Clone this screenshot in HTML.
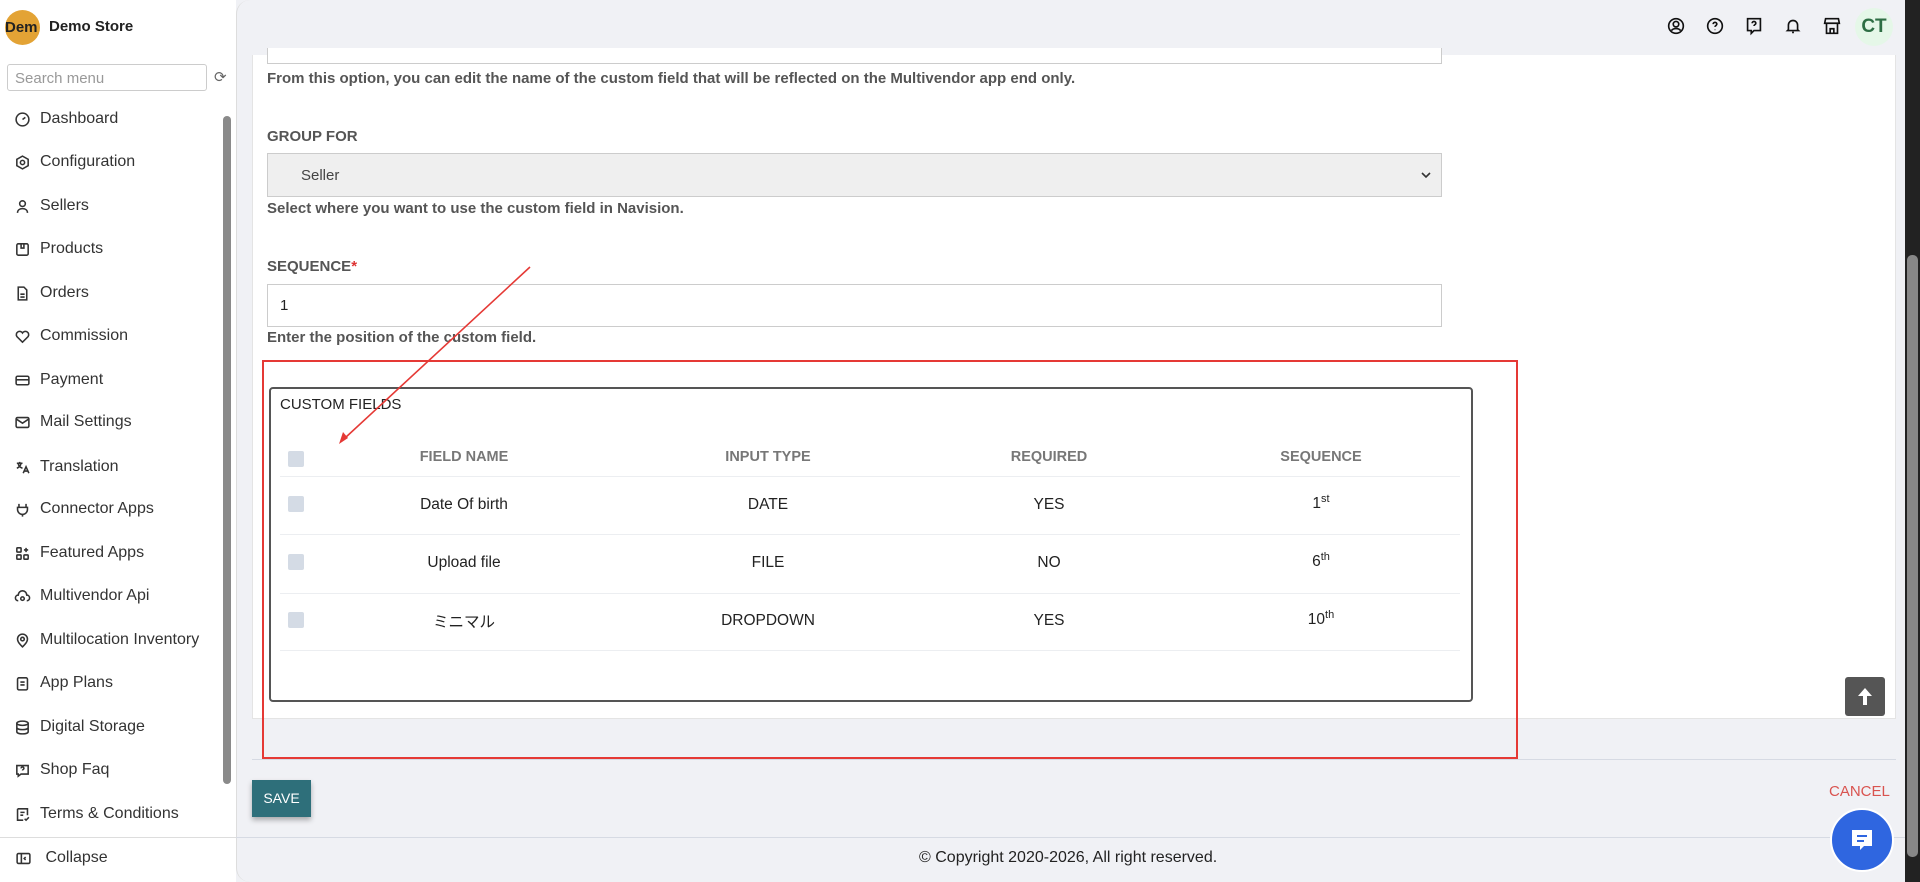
<!DOCTYPE html>
<html><head><meta charset="utf-8"><style>
*{box-sizing:border-box;margin:0;padding:0}
body{width:1920px;height:882px;overflow:hidden;background:#f0f1f5;font-family:"Liberation Sans","Noto Sans CJK JP",sans-serif;position:relative;color:#222}
.a{position:absolute}
.side{left:0;top:0;width:236px;height:882px;background:#fff}
.mi{position:absolute;left:14px;font-size:16px;color:#333;display:flex;align-items:center;gap:9px;transform:translateY(-50%)}
.mi svg{width:17px;height:17px;fill:none;stroke:#333;stroke-width:2.2}
.help{font-size:15px;font-weight:bold;color:#555}
.lbl{font-size:15px;font-weight:bold;color:#555}
.inp{border:1px solid #ccc;background:#fff}
.th{font-size:14.5px;font-weight:bold;color:#777;transform:translate(-50%,-50%);position:absolute}
.td{font-size:15.5px;color:#222;transform:translate(-50%,-50%);position:absolute}
.cb{position:absolute;width:16px;height:16px;background:#d4dbe5;border-radius:2px;left:288px}
.hl{position:absolute;left:280px;width:1180px;height:1px;background:#eceef1}
.ic{position:absolute;top:15px;width:22px;height:22px;fill:none;stroke:#111;stroke-width:1.8}
</style></head><body>
<div class="a side">
 <div class="a" style="left:5px;top:10px;width:35px;height:35px;border-radius:50%;background:#e3a335;overflow:hidden;font-size:15px;font-weight:bold;line-height:35px;padding-left:0">Dem</div>
 <div class="a" style="left:49px;top:18px;font-size:15px;font-weight:bold">Demo Store</div>
 <div class="a" style="left:7px;top:64px;width:200px;height:27px;border:1px solid #ccc;border-radius:3px;font-size:15px;color:#999;padding:5px 7px">Search menu</div>
 <div class="a" style="left:214px;top:68px;font-size:15px;color:#666">⟳</div>
 <div class="mi" style="top:119px"><svg viewBox="0 0 24 24"><circle cx="12" cy="12" r="9"/><path d="M12 12l4-3"/></svg>Dashboard</div>
 <div class="mi" style="top:162px"><svg viewBox="0 0 24 24"><path d="M12 3l8 4.5v9L12 21l-8-4.5v-9z"/><circle cx="12" cy="12" r="3"/></svg>Configuration</div>
 <div class="mi" style="top:206px"><svg viewBox="0 0 24 24"><circle cx="12" cy="8" r="4"/><path d="M5 21c0-4 3-6 7-6s7 2 7 6"/></svg>Sellers</div>
 <div class="mi" style="top:249px"><svg viewBox="0 0 24 24"><rect x="4" y="4" width="16" height="16" rx="2"/><path d="M10 4v6h4V4"/></svg>Products</div>
 <div class="mi" style="top:293px"><svg viewBox="0 0 24 24"><path d="M6 3h8l4 4v14H6z"/><path d="M9 13h6M9 17h6"/></svg>Orders</div>
 <div class="mi" style="top:336px"><svg viewBox="0 0 24 24"><path d="M12 20l-8-8a4.5 4.5 0 018-5 4.5 4.5 0 018 5z"/></svg>Commission</div>
 <div class="mi" style="top:380px"><svg viewBox="0 0 24 24"><rect x="3" y="6" width="18" height="12" rx="2"/><path d="M3 11h18"/></svg>Payment</div>
 <div class="mi" style="top:422px"><svg viewBox="0 0 24 24"><rect x="3" y="5" width="18" height="14" rx="2"/><path d="M3 7l9 6 9-6"/></svg>Mail Settings</div>
 <div class="mi" style="top:467px"><svg viewBox="0 0 24 24"><path d="M4 6h8M8 4v2M6 6c0 4 3 6 6 7M10 6c-1 4-3 6-6 7M13 20l4-9 4 9M14.5 17h5"/></svg>Translation</div>
 <div class="mi" style="top:509px"><svg viewBox="0 0 24 24"><path d="M7 4v5M17 4v5M5 9h14v3a7 7 0 01-14 0zM12 19v3"/></svg>Connector Apps</div>
 <div class="mi" style="top:553px"><svg viewBox="0 0 24 24"><rect x="4" y="4" width="6" height="6" rx="1"/><rect x="4" y="14" width="6" height="6" rx="1"/><rect x="14" y="14" width="6" height="6" rx="1"/><path d="M17 4v6M14 7h6"/></svg>Featured Apps</div>
 <div class="mi" style="top:596px"><svg viewBox="0 0 24 24"><path d="M6 18a4 4 0 010-8 6 6 0 0112 0 4 4 0 010 8"/><circle cx="12" cy="15" r="2.5"/></svg>Multivendor Api</div>
 <div class="mi" style="top:640px"><svg viewBox="0 0 24 24"><path d="M12 21s-7-6-7-11a7 7 0 0114 0c0 5-7 11-7 11z"/><circle cx="12" cy="10" r="2.5"/></svg>Multilocation Inventory</div>
 <div class="mi" style="top:683px"><svg viewBox="0 0 24 24"><rect x="5" y="4" width="14" height="17" rx="2"/><path d="M9 10h6M9 14h6"/></svg>App Plans</div>
 <div class="mi" style="top:727px"><svg viewBox="0 0 24 24"><ellipse cx="12" cy="6" rx="8" ry="3"/><path d="M4 6v12c0 2 4 3 8 3s8-1 8-3V6M4 12c0 2 4 3 8 3s8-1 8-3"/></svg>Digital Storage</div>
 <div class="mi" style="top:770px"><svg viewBox="0 0 24 24"><path d="M4 5h16v12H10l-4 3v-3H4z"/><path d="M10 9a2 2 0 114 0c0 1.5-2 1.5-2 3"/></svg>Shop Faq</div>
 <div class="mi" style="top:814px"><svg viewBox="0 0 24 24"><path d="M5 4h14v9M5 4v16h8"/><path d="M9 9h6M9 13h4M15 18l2 2 4-4"/></svg>Terms &amp; Conditions</div>
 <div class="a" style="left:223px;top:116px;width:8px;height:668px;background:#8a8a8a;border-radius:4px"></div>
 <div class="a" style="left:0;top:837px;width:236px;height:1px;background:#ddd"></div>
 <div class="mi" style="top:858px;left:15px"><svg viewBox="0 0 24 24"><rect x="3" y="5" width="18" height="14" rx="2"/><path d="M9 5v14M15 10l-2 2 2 2"/></svg>&nbsp;Collapse</div>
</div>
<div class="a" style="left:236px;top:0;width:1669px;height:882px;background:#f0f1f5;border-left:1px solid #ddd;border-radius:14px 0 0 14px"></div>
<svg class="ic" style="left:1665px" viewBox="0 0 24 24"><circle cx="12" cy="12" r="8"/><circle cx="12" cy="10" r="3"/><path d="M7 17c2-3 8-3 10 0"/></svg>
<svg class="ic" style="left:1704px" viewBox="0 0 24 24"><circle cx="12" cy="12" r="8"/><path d="M10 10a2 2 0 114 0c0 1.5-2 1.5-2 3M12 16v.5"/></svg>
<svg class="ic" style="left:1743px" viewBox="0 0 24 24"><path d="M5 4h14v13h-7l-3 3v-3H5z"/><path d="M10 9a2 2 0 114 0c0 1.5-2 1.5-2 3"/></svg>
<svg class="ic" style="left:1782px" viewBox="0 0 24 24"><path d="M7 16V11a5 5 0 0110 0v5l1 1H6zM11 19h2"/></svg>
<svg class="ic" style="left:1821px" viewBox="0 0 24 24"><path d="M5 4h14l1 5H4zM6 9v11h12V9M10 20v-5h4v5"/></svg>
<div class="a" style="left:1855px;top:8px;width:38px;height:38px;border-radius:50%;background:#e5f7e8;color:#2e6e44;font-size:19px;font-weight:bold;text-align:center;line-height:38px">CT</div>
<div class="a" style="left:252px;top:55px;width:1644px;height:664px;background:#fff;border:1px solid #e4e4e4;border-top:none"></div>
<div class="a inp" style="left:267px;top:48px;width:1175px;height:16px;border-top:none"></div>
<div class="a help" style="left:267px;top:70px">From this option, you can edit the name of the custom field that will be reflected on the Multivendor app end only.</div>
<div class="a lbl" style="left:267px;top:128px">GROUP FOR</div>
<div class="a" style="left:267px;top:153px;width:1175px;height:44px;background:#efefef;border:1px solid #ccc;font-size:15px;color:#444;padding:13px 33px">Seller<svg style="position:absolute;right:10px;top:17px" width="10" height="8" viewBox="0 0 10 8"><path d="M1 2l4 4 4-4" stroke="#333" stroke-width="1.6" fill="none"/></svg></div>
<div class="a help" style="left:267px;top:200px">Select where you want to use the custom field in Navision.</div>
<div class="a lbl" style="left:267px;top:258px">SEQUENCE<span style="color:#d33">*</span></div>
<div class="a inp" style="left:267px;top:284px;width:1175px;height:43px;font-size:15px;padding:12px 12px">1</div>
<div class="a help" style="left:267px;top:329px">Enter the position of the custom field.</div>
<div class="a" style="left:269px;top:387px;width:1204px;height:315px;border:2px solid #555;border-radius:4px"></div>
<div class="a" style="left:280px;top:396px;font-size:15px">CUSTOM FIELDS</div>
<div class="th" style="left:464px;top:457px">FIELD NAME</div>
<div class="th" style="left:768px;top:457px">INPUT TYPE</div>
<div class="th" style="left:1049px;top:457px">REQUIRED</div>
<div class="th" style="left:1321px;top:457px">SEQUENCE</div>
<div class="cb" style="top:451px"></div>
<div class="hl" style="top:476px"></div>
<div class="cb" style="top:496px"></div>
<div class="td" style="left:464px;top:505px">Date Of birth</div><div class="td" style="left:768px;top:505px">DATE</div><div class="td" style="left:1049px;top:505px">YES</div><div class="td" style="left:1321px;top:503px">1<sup style="font-size:11px">st</sup></div>
<div class="hl" style="top:534px"></div>
<div class="cb" style="top:554px"></div>
<div class="td" style="left:464px;top:563px">Upload file</div><div class="td" style="left:768px;top:563px">FILE</div><div class="td" style="left:1049px;top:563px">NO</div><div class="td" style="left:1321px;top:561px">6<sup style="font-size:11px">th</sup></div>
<div class="hl" style="top:593px"></div>
<div class="cb" style="top:612px"></div>
<div class="td" style="left:464px;top:621px">ミニマル</div><div class="td" style="left:768px;top:621px">DROPDOWN</div><div class="td" style="left:1049px;top:621px">YES</div><div class="td" style="left:1321px;top:619px">10<sup style="font-size:11px">th</sup></div>
<div class="hl" style="top:650px"></div>
<div class="a" style="left:262px;top:360px;width:1256px;height:399px;border:2px solid #e53935"></div>
<svg class="a" style="left:0;top:0" width="1920" height="882"><line x1="530" y1="267" x2="345" y2="438" stroke="#e53935" stroke-width="1.6"/><path d="M339 444l4-12 5 6z" fill="#e53935"/></svg>
<div class="a" style="left:1845px;top:677px;width:40px;height:39px;background:#555;border-radius:3px"><svg width="40" height="39" viewBox="0 0 40 39"><path d="M20 11l-7 8h5v9h4v-9h5z" fill="#fff"/></svg></div>
<div class="a" style="left:252px;top:759px;width:1644px;height:1px;background:#d6dae3"></div>
<div class="a" style="left:252px;top:780px;width:59px;height:37px;background:#2e6f7a;color:#fff;font-size:14px;text-align:center;line-height:37px;box-shadow:0 3px 5px rgba(0,0,0,.3)">SAVE</div>
<div class="a" style="left:1829px;top:783px;color:#d9534f;font-size:15px">CANCEL</div>
<div class="a" style="left:236px;top:837px;width:1669px;height:1px;background:#d6dae3"></div>
<div class="a" style="left:919px;top:849px;font-size:16px">© Copyright 2020-2026, All right reserved.</div>
<div class="a" style="left:1830px;top:808px;width:64px;height:64px;border-radius:50%;background:#2f66e0;border:2px solid #fff"><svg width="60" height="60" viewBox="0 0 60 60"><path d="M20 20h20v16h-8l-4 4v-4h-8z" fill="#fff"/><path d="M25 26h10M25 31h7" stroke="#2f66e0" stroke-width="2"/></svg></div>
<div class="a" style="left:1905px;top:0;width:15px;height:882px;background:#222"></div>
<div class="a" style="left:1907px;top:255px;width:11px;height:602px;background:#888;border-radius:5px"></div>
</body></html>
